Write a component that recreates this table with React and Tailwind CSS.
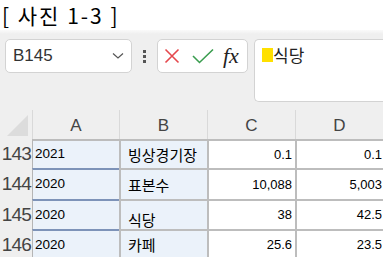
import React from "react";

const rows = [
  { n: "143", a: "2021", b: "빙상경기장", c: "0.1", d: "0.1", h: "h-[29px]", bAlign: "items-center" },
  { n: "144", a: "2020", b: "표본수", c: "10,088", d: "5,003", h: "h-[31px]", bAlign: "items-center" },
  { n: "145", a: "2020", b: "식당", c: "38", d: "42.5", h: "h-[30px]", bAlign: "items-end" },
  { n: "146", a: "2020", b: "카페", c: "25.6", d: "23.5", h: "h-[30px]", bAlign: "items-center" },
];

export default function App() {
  return (
    <div className="w-[383px] h-[257px] overflow-hidden bg-white font-['Noto_Sans','Noto_Sans_CJK_KR',sans-serif]">
      {/* title */}
      <div className="h-[30px] bg-white pl-[2px] pt-[3px]">
        <div className="text-[21px] leading-[24px] font-normal text-black tracking-[2px] font-['Noto_Sans_CJK_KR',sans-serif] whitespace-pre">
          [ 사진 1-3 ]
        </div>
      </div>
      {/* toolbar */}
      <div className="h-[80px] bg-[linear-gradient(to_bottom,#fafafa_0px,#efefef_4px,#efefef_100%)] flex items-start pt-[9px] pl-[5px]">
        <div className="w-[127px] h-[34px] bg-white border border-[#d3d3d3] rounded-[5px] flex items-center justify-between pl-[7px] pr-[6px]">
          <span className="text-[17px] text-[#333] font-['Liberation_Sans',sans-serif]">B145</span>
          <svg width="12" height="8" viewBox="0 0 12 8" className="mr-[1px]">
            <path d="M1 1.5 L6 6 L11 1.5" fill="none" stroke="#555" strokeWidth="1.2" />
          </svg>
        </div>
        <div className="w-[25px] h-[34px] flex flex-col items-center justify-center gap-[2px]">
          <div className="w-[3px] h-[3px] bg-[#555]" />
          <div className="w-[3px] h-[3px] bg-[#555]" />
          <div className="w-[3px] h-[3px] bg-[#555]" />
        </div>
        <div className="w-[91px] h-[34px] bg-white border border-[#d3d3d3] rounded-[5px] flex items-center pl-[6px]">
          <svg width="16" height="16" viewBox="0 0 16 16">
            <path d="M1.5 1.5 L14.5 14.5 M14.5 1.5 L1.5 14.5" stroke="#e5484d" strokeWidth="1.6" fill="none" />
          </svg>
          <svg width="22" height="16" viewBox="0 0 22 16" className="ml-[12px]">
            <path d="M1 8 L7.5 14.5 L21 1.5" stroke="#3a9d4f" strokeWidth="1.6" fill="none" />
          </svg>
          <span className="ml-[9px] text-[22px] leading-none italic font-normal text-[#222] font-['Liberation_Serif',serif]">fx</span>
        </div>
        <div className="ml-[6px] flex-1 h-[63px] bg-white border border-[#d3d3d3] rounded-l-[5px] border-r-0 flex items-start pl-[7px] pt-[7px]">
          <div className="w-[11px] h-[14px] bg-[#ffe000] mt-[1px]" />
          <span className="text-[17px] leading-[18px] text-[#222]">식당</span>
        </div>
      </div>
      {/* header row */}
      <div className="flex h-[29px] bg-[#efefef]">
        <div className="w-[32px] relative">
          <div className="absolute left-[7px] bottom-[3px] w-0 h-0 border-l-[21px] border-l-transparent border-b-[21px] border-b-[#dcdcdc]" />
        </div>
        {["A", "B", "C", "D"].map((c, i) => (
          <div
            key={c}
            className={`${i === 0 ? "w-[87px]" : "w-[88px]"} border-l border-[#d9d9d9] flex items-center justify-center text-[17px] text-[#444] font-['Liberation_Sans',sans-serif] pt-[2px]`}
          >
            {c}
          </div>
        ))}
      </div>
      {/* data rows */}
      {rows.map((r, idx) => (
        <div key={r.n} className={`flex ${r.h}`}>
          <div className="w-[32px] bg-[#efefef] flex items-center justify-end pr-[1px] text-[19px] tracking-[-0.8px] text-[#444] font-['Liberation_Sans',sans-serif] leading-none overflow-visible whitespace-nowrap">
            {r.n}
          </div>
          <div
            className={`w-[87px] bg-[#ebf2fa] border-l border-[#b5b5b5] border-t-2 ${idx === 0 ? "border-t-[#bcbcbc]" : "border-t-[#7d93b8]"} flex items-center pl-[2px] text-[13.5px] text-black font-['Liberation_Sans',sans-serif]`}
          >
            {r.a}
          </div>
          <div
            className={`w-[88px] bg-[#ebf2fa] border-l-2 border-l-[#bdbdbd] border-t-2 border-t-[#bdbdbd] flex ${r.bAlign} pl-[7px] text-[15px] leading-[18px] text-black font-['Noto_Sans_CJK_KR',sans-serif]`}
          >
            {r.b}
          </div>
          <div className="w-[88px] bg-white border-l-2 border-l-[#bdbdbd] border-t-2 border-t-[#bdbdbd] flex items-center justify-end pr-[3px] text-[13px] text-black font-['Liberation_Sans',sans-serif]">
            {r.c}
          </div>
          <div className="w-[88px] bg-white border-l-2 border-l-[#bdbdbd] border-t-2 border-t-[#bdbdbd] flex items-center justify-end pr-[1px] text-[13px] text-black font-['Liberation_Sans',sans-serif]">
            {r.d}
          </div>
        </div>
      ))}
    </div>
  );
}
